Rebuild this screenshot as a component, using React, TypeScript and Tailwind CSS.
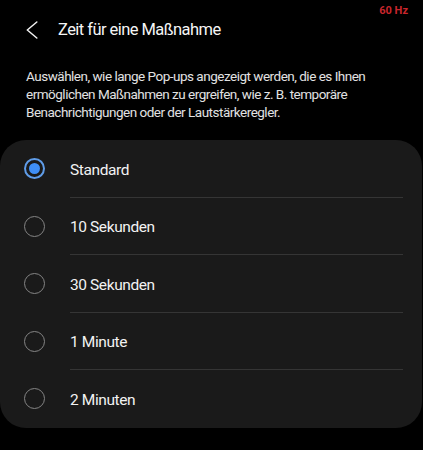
const options = ['Standard', '10 Sekunden', '30 Sekunden', '1 Minute', '2 Minuten']

const Radio = ({ checked }: { checked: boolean }) =>
  checked ? (
    <div className="w-[21px] h-[21px] rounded-full border-2 border-[#5f9ce8] flex items-center justify-center">
      <div className="w-[11px] h-[11px] rounded-full bg-[#3f8ef5]" />
    </div>
  ) : (
    <div className="w-[21px] h-[21px] rounded-full border-[1.5px] border-[#858585]" />
  )

export default function App() {
  const selected = 0

  return (
    <div className="relative w-[423px] h-[450px] bg-black overflow-hidden font-['Roboto','Liberation_Sans',sans-serif]">
      <div className="absolute top-[3px] right-[15px] text-[11px] font-bold text-[#c8262c]">60 Hz</div>

      <div className="h-[60px] flex items-center">
        <svg className="ml-[26px]" width="12" height="18" viewBox="0 0 12 18" fill="none">
          <polyline points="10.8,1 1.3,9 10.8,17" stroke="#f2f2f2" strokeWidth="1.5" strokeLinecap="round" strokeLinejoin="round" />
        </svg>
        <h1 className="ml-[20px] text-[16.5px] tracking-[-0.55px] text-[#f5f5f5]">Zeit für eine Maßnahme</h1>
      </div>

      <p className="mt-[7px] px-[26px] text-[13.5px] leading-[18px] tracking-[-0.5px] text-[#e2e2e2]">
        Auswählen, wie lange Pop-ups angezeigt werden, die es Ihnen
        <br />
        ermöglichen Maßnahmen zu ergreifen, wie z. B. temporäre
        <br />
        Benachrichtigungen oder der Lautstärkeregler.
      </p>

      <div className="mt-[19px] w-[422px] rounded-[26px] bg-[#1a1a1a]">
        {options.map((o, i) => (
          <div key={o} className="relative h-[57.5px] flex items-center">
            <div className="ml-[24px]">
              <Radio checked={i === selected} />
            </div>
            <span className="ml-[25px] pt-[3px] text-[15.5px] tracking-[-0.4px] text-[#f2f2f2]">{o}</span>
            {i < options.length - 1 && (
              <div className="absolute bottom-0 left-[70px] right-[19px] h-px bg-[#353535]" />
            )}
          </div>
        ))}
      </div>
    </div>
  )
}
